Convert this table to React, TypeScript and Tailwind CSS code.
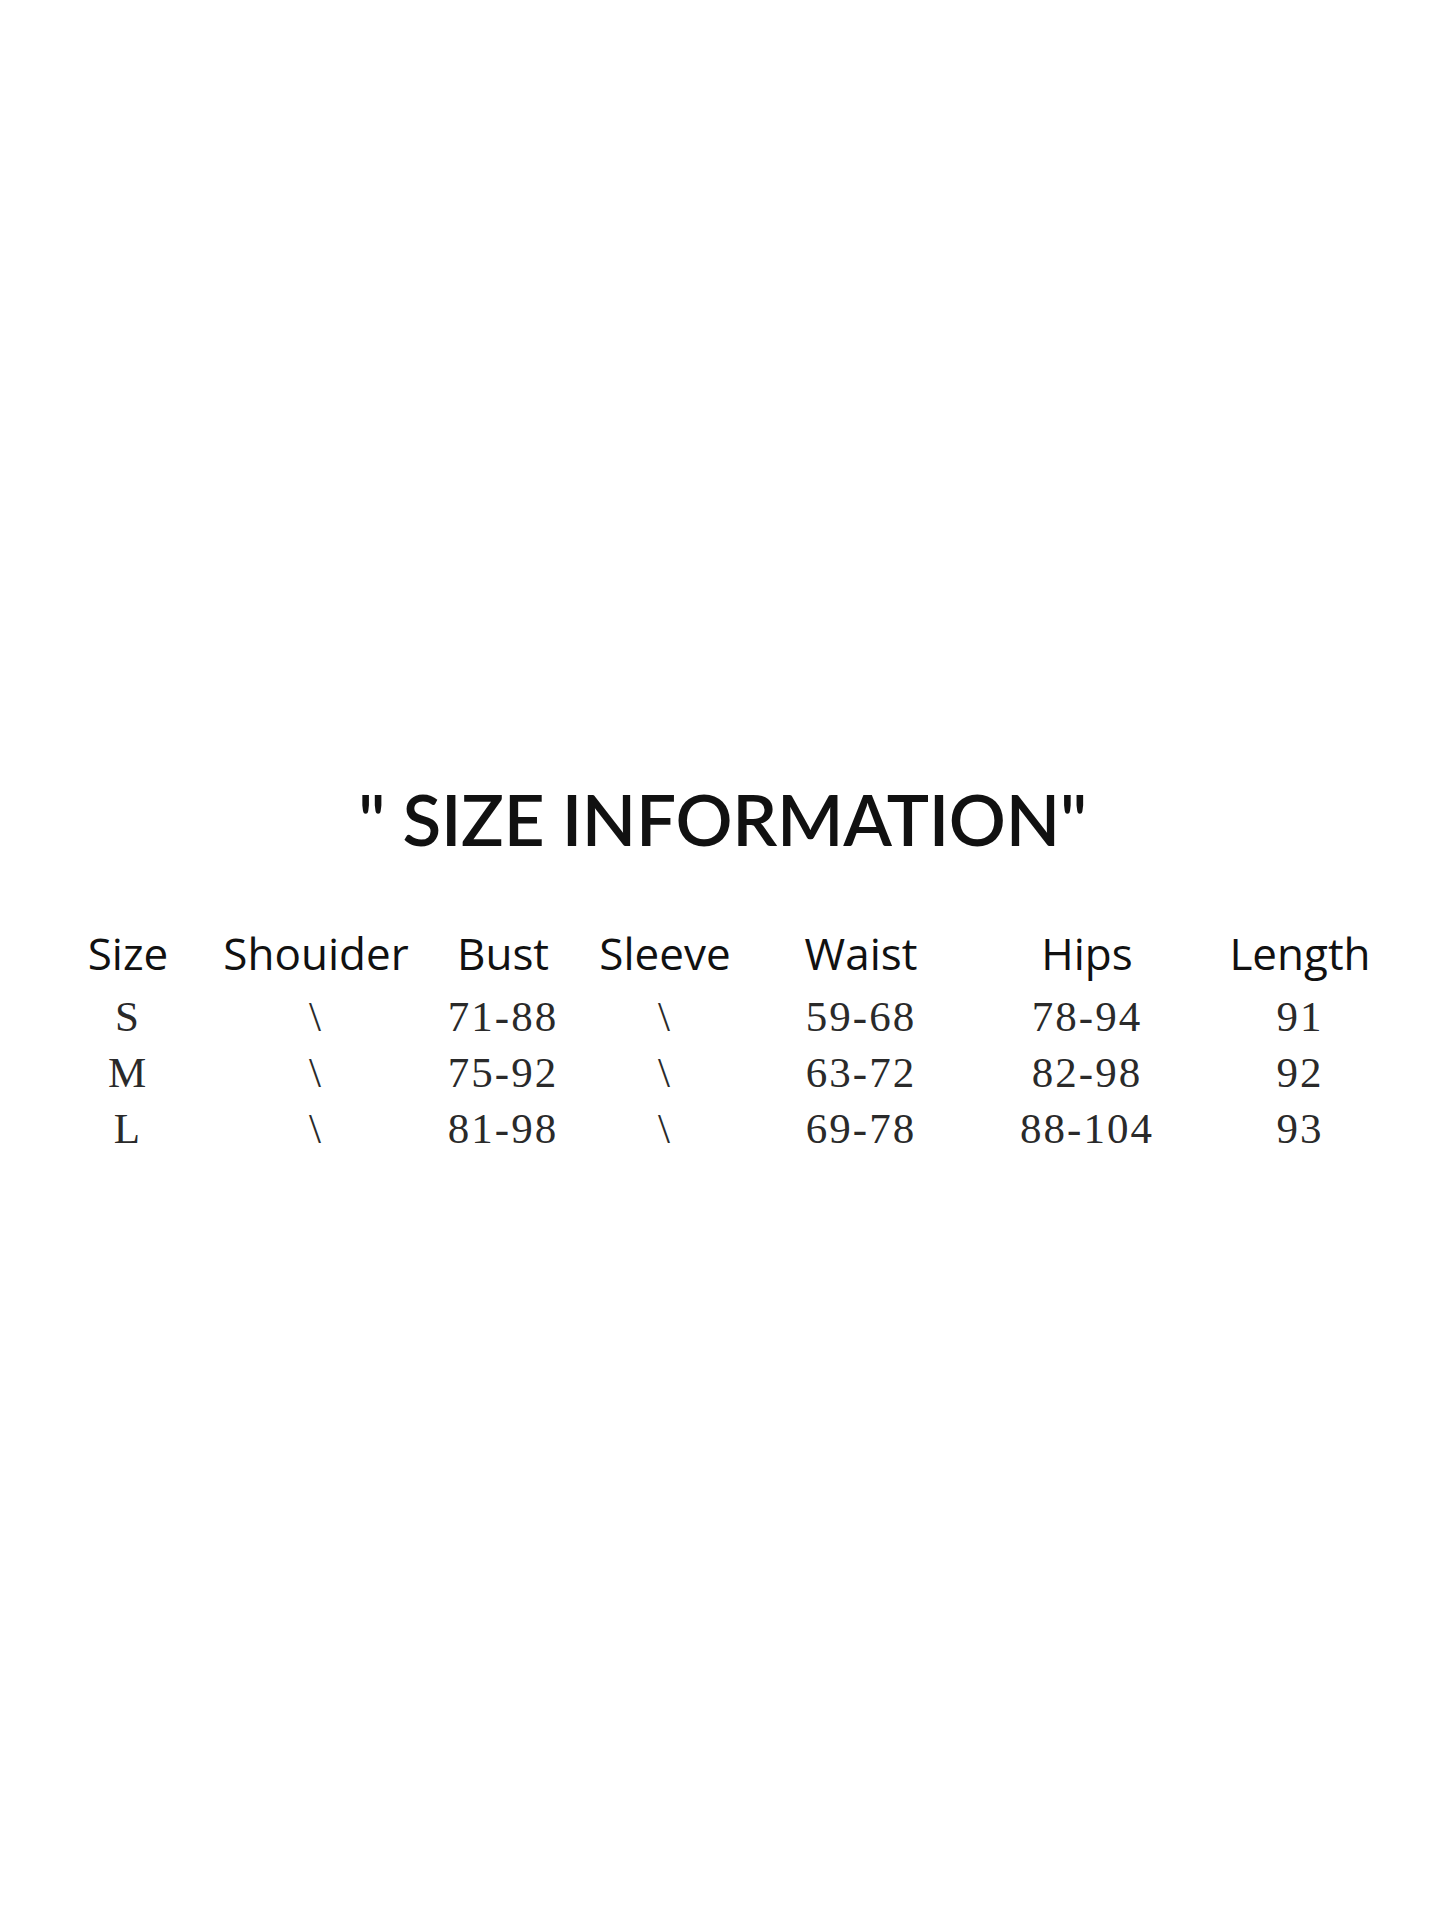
const headers = ["Size", "Shouider", "Bust", "Sleeve", "Waist", "Hips", "Length"];

const rows = [
  ["S", "\\", "71-88", "\\", "59-68", "78-94", "91"],
  ["M", "\\", "75-92", "\\", "63-72", "82-98", "92"],
  ["L", "\\", "81-98", "\\", "69-78", "88-104", "93"],
];

const grid =
  "grid grid-cols-[188px_188px_186px_138px_254px_198px_228px] justify-items-center";

export default function App() {
  return (
    <div className="min-h-[1927px] w-full bg-white">
      <div className="pt-[784px]">
        <h1 className="text-center font-['Lato','Open_Sans',sans-serif] text-[71px] font-semibold leading-[70px] tracking-[-0.3px] text-[#111]">
          " SIZE INFORMATION"
        </h1>
      </div>

      <div className="mt-[71px] pl-[34px]">
        <div
          className={`${grid} font-['Open_Sans','Noto_Sans',sans-serif] text-[44px] leading-[56px] text-[#111]`}
        >
          {headers.map((h) => (
            <div key={h}>{h}</div>
          ))}
        </div>
        <div className="mt-[8px] font-['Liberation_Serif','Times_New_Roman',serif] text-[43px] leading-[56px] tracking-[2px] text-[#2a2a2a]">
          {rows.map((r, i) => (
            <div key={i} className={grid}>
              {r.map((c, j) => (
                <div key={j}>{c}</div>
              ))}
            </div>
          ))}
        </div>
      </div>
    </div>
  );
}
